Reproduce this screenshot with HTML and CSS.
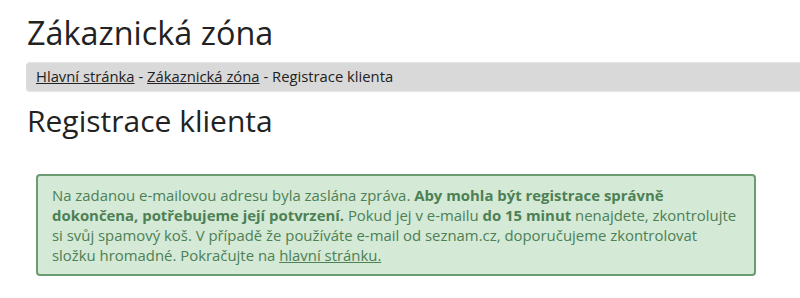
FILE: index.html
```html
<!DOCTYPE html>
<html lang="cs">
<head>
  <meta charset="UTF-8">
  <meta name="viewport" content="width=device-width, initial-scale=1.0">
  <title>Registrace klienta</title>
  <link rel="stylesheet" href="styles.css">
</head>

<body>
  <div class="page">
    <h1>Zákaznická zóna</h1>
    <div class="breadcrumb">
      <a href="#">Hlavní stránka</a> - <a href="#">Zákaznická zóna</a> - Registrace klienta
    </div>
    <h2>Registrace klienta</h2>
    <div class="alert-success">
      Na zadanou e-mailovou adresu byla zaslána zpráva. <strong>Aby mohla být registrace správně dokončena, potřebujeme její potvrzení.</strong>
      Pokud jej v e-mailu <strong>do 15 minut</strong> nenajdete, zkontrolujte si svůj spamový koš. V případě že používáte e-mail od seznam.cz,
      doporučujeme zkontrolovat složku hromadné. Pokračujte na <a href="#">hlavní stránku.</a>
    </div>
  </div>
</body>
</html>
```

FILE: styles.css
```css
body {
  font-family: "Open Sans", Arial, sans-serif;
  color: #222;
  margin: 0;
  background: #fff;
  overflow: hidden;
}

.page {
  padding: 0 0 0 26px;
}

h1 {
  font-size: 32.4px;
  font-weight: 400;
  margin: 0;
  padding: 12px 0 0 1px;
  line-height: 40px;
}

.breadcrumb {
  margin: 10px -10px 0 0;
  background-color: #d9d9d9;
  border-top: 1px solid #e6e6e6;
  border-bottom: 1px solid #e6e6e6;
  border-radius: 4px 0 0 4px;
  padding: 3px 10px 5px;
  font-size: 14.8px;
  line-height: 20px;
  color: #222;
}

.breadcrumb a {
  color: #222;
}

h2 {
  font-size: 30px;
  font-weight: 400;
  margin: 0;
  padding: 9px 0 0 1px;
  line-height: 40px;
}

.alert-success {
  margin: 33px 44px 0 10px;
  padding: 9px 12px 9px 14px;
  background-color: #d4e9d6;
  border: 2px solid #6b9b70;
  border-radius: 4px;
  color: #4d8054;
  font-size: 14.9px;
  line-height: 20px;
}

.alert-success a {
  color: #4d8054;
}
```
